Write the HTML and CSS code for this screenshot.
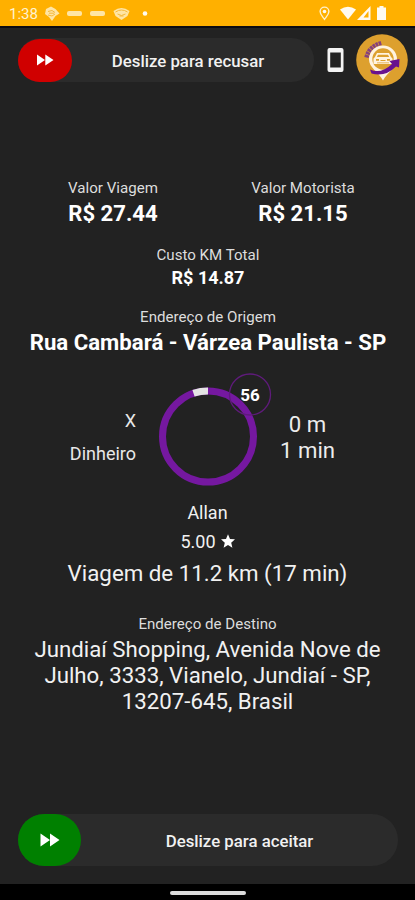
FILE: index.html
```
<!DOCTYPE html>
<html lang="pt-BR">
<head>
<meta charset="utf-8">
<meta name="viewport" content="width=device-width">
<title>Nova viagem</title>
<link rel="stylesheet" href="styles.css">
</head>
<body>
<div class="screen">
  <header class="status">
    <span class="clock">1:38</span>
    <svg class="notices" width="106" height="16" viewBox="0 0 106 16">
      <path class="pale" d="M7 .5l4.500 2.500 4 4.500-4 2.500-3.500 5-3-4-4-3 1-5z"/>
      <path class="cut" d="M4 5.500l4-1 3 2M4 9l4 1 3-2M5 7.200h5"/>
      <rect class="pale" x="23" y="5" width="15" height="5" rx="2"/>
      <rect class="pale" x="46" y="5" width="15" height="5" rx="2"/>
      <path class="pale" d="M69.500 5Q77.500-1 85.500 5l-2 5-6 4-6-4z"/>
      <path class="cut" d="M71.500 6q6-4 12 0M73.500 8q4 3 8 0M75.500 10h4"/>
      <circle class="white" cx="101" cy="7.500" r="2.300"/>
    </svg>
    <svg class="signals" width="70" height="16" viewBox="0 0 70 16">
      <path class="line" d="M5.500 13.300C3.500 10.500 1.100 8.500 1.100 5.500a4.400 4.400 0 0 1 8.800 0c0 3-2.400 5-4.400 7.800z"/>
      <circle class="white" cx="5.500" cy="5.500" r="1.800"/>
      <path class="white" d="M21 3.500q8-5.500 16 0l-8 10z"/>
      <path class="white" fill-rule="evenodd" d="M51.500 0v14H38zM49.500 5v6.500h-5z"/>
      <path class="white" d="M60.500 1.500V0h4v1.500H67V14h-9V1.500z"/>
    </svg>
  </header>

  <div class="top">
    <div class="slider slider-reject">
      <div class="knob"><svg width="17" height="12" viewBox="0 0 17 12"><path d="M0 .5L8 6l-8 5.500zM8.300.5L16.500 6l-8.200 5.500z"/></svg></div>
      <span class="slider-text">Deslize para recusar</span>
    </div>
    <svg class="phone" width="17" height="26" viewBox="0 0 17 26"><path fill-rule="evenodd" d="M2.500 1h12A2 2 0 0 1 16.500 3v20a2 2 0 0 1-2 2h-12a2 2 0 0 1-2-2V3a2 2 0 0 1 2-2zM3.200 5.500v15h10.600v-15z"/></svg>
    <svg class="logo" width="52" height="52" viewBox="0 0 52 52">
      <circle cx="26" cy="26" r="25.800" fill="#dda02e"/>
      <path d="M10.500 23.500Q13 12.500 25.500 9" fill="none" stroke="#85417d" stroke-width="4.500" stroke-dasharray="2.500 .7"/>
      <path d="M27 11.500a14 14 0 0 0-14 14c0 8 9 12 14 21 5-9 14-13 14-21a14 14 0 0 0-14-14z" fill="#fff3df"/>
      <circle cx="27" cy="25" r="10.700" fill="#dda02e"/>
      <path d="M21 19h12l2 4 1.500 1.500V30h-19v-5.500L19 23z" fill="#fff3df"/>
      <path d="M22 20.700h10l1.200 2.300H20.800zM20 25h3v1.800h-3zm11 0h3v1.800h-3zM24.500 26h5v1h-5zM21 28.400h12v.8H21z" fill="#dda02e"/>
      <path d="M14 35.500q11 5 22-5.500l-2.500-3 10-2-.5 8.500-3-1Q29 43.500 15.500 39.500z" fill="#69128f"/>
    </svg>
  </div>

  <main class="trip">
    <section class="fares">
      <div class="fare fare-trip"><div class="label">Valor Viagem</div><div class="amount">R$ 27.44</div></div>
      <div class="fare fare-driver"><div class="label">Valor Motorista</div><div class="amount">R$ 21.15</div></div>
    </section>
    <section class="cost"><div class="label">Custo KM Total</div><div class="cost-value">R$ 14.87</div></section>
    <section class="origin"><div class="label">Endereço de Origem</div><div class="origin-value">Rua Cambará - Várzea Paulista - SP</div></section>
    <section class="timer-row">
      <div class="payment"><div>X</div><div>Dinheiro</div></div>
      <div class="timer">
        <svg width="114" height="114" viewBox="0 0 114 114">
          <circle class="ring" cx="50" cy="63.500" r="45.500"/>
          <path class="elapsed" d="M35.500 20.300A45.500 45.500 0 0 1 50 18"/>
          <circle class="badge-ring" cx="92" cy="21.500" r="20.500"/>
        </svg>
        <span class="badge">56</span>
      </div>
      <div class="pickup"><div>0 m</div><div>1 min</div></div>
    </section>
    <div class="name">Allan</div>
    <div class="rating"><span>5.00</span><svg width="14" height="14" viewBox="0 0 14 14"><path d="M7 .2l2 4.700 5 .4-3.800 3.400 1.200 5L7 11l-4.400 2.700 1.200-5L0 5.300l5-.4z"/></svg></div>
    <div class="distance">Viagem de 11.2 km (17 min)</div>
    <section class="destination"><div class="label">Endereço de Destino</div>
      <div class="destination-value"><div>Jundiaí Shopping, Avenida Nove de</div><div>Julho, 3333, Vianelo, Jundiaí - SP,</div><div>13207-645, Brasil</div></div>
    </section>
  </main>

  <div class="slider slider-accept">
    <div class="knob"><svg width="20" height="14" viewBox="0 0 20 14"><path d="M.5.500L10 7 .5 13.500zM10 .5L19.500 7 10 13.500z"/></svg></div>
    <span class="slider-text">Deslize para aceitar</span>
  </div>
  <footer class="nav"><div class="handle"></div></footer>
</div>
</body>
</html>
```
FILE: styles.css
```
* { box-sizing: border-box; }
body { margin: 0; background: #222; color: #f1f1f1; font-family: Roboto, "Liberation Sans", sans-serif; }
svg { display: block; flex: none; }
.screen { width: 415px; height: 900px; display: flex; flex-direction: column; overflow: hidden; background: #222; white-space: nowrap; }

.status { height: 28px; flex: none; display: flex; align-items: flex-start; padding: 6px 0 0 9px; background: #ffb000; border-bottom: 2px solid #0b0a10; }
.clock { width: 35px; font-size: 15px; line-height: 16px; color: #fff3d0; }
.signals { margin-left: 169px; }
.white { fill: #fffaf0; }
.pale { fill: #ffe5a5; }
.cut { fill: none; stroke: #f5b93c; stroke-width: 1; }
.line { fill: none; stroke: #fff1cc; stroke-width: 1.4; }

.top { height: 60px; flex: none; display: flex; align-items: center; padding: 4px 0 0 18px; }
.slider { display: flex; align-items: center; flex: none; background: #2b2b2b; }
.slider-reject { width: 296px; height: 44px; border-radius: 22px; }
.knob { height: 100%; display: flex; align-items: center; justify-content: center; fill: #fff; }
.slider-reject .knob { width: 54px; height: 43px; border-radius: 22px; background: #d00000; }
.slider-text { flex: 1; padding-top: 2px; text-align: center; font-size: 16.8px; font-weight: 500; }
.slider-reject .slider-text { padding-right: 10px; }
.phone { margin-left: 13px; fill: #f4f4f4; }
.logo { margin-left: 12px; }

.trip { flex: none; height: 726px; padding-top: 90px; text-align: center; }
.label { font-size: 15.1px; line-height: 20px; color: #ddd; }
.fares { display: flex; justify-content: space-between; padding: 0 54px 0 53px; }
.fare { width: 120px; }
.fare-driver { width: 116px; }
.amount { margin-top: 2px; font-size: 22.1px; line-height: 27px; font-weight: 700; color: #fff; }
.cost { margin-top: 18px; padding-left: 1px; }
.cost-value { margin-top: 1px; font-size: 18px; line-height: 24px; font-weight: 700; color: #fff; }
.origin { margin-top: 17px; padding-left: 1px; }
.origin-value { margin-top: 1px; font-size: 22.2px; line-height: 28px; font-weight: 700; color: #fff; }

.timer-row { margin-top: 17px; height: 114px; display: flex; }
.payment { width: 136px; padding-top: 35px; text-align: right; font-size: 18px; line-height: 26px; color: #e8e8e8; }
.payment div + div { margin-top: 7px; }
.timer { position: relative; width: 114px; margin-left: 22px; }
.ring { fill: none; stroke: #7518a0; stroke-width: 7; }
.elapsed { fill: none; stroke: #e4e4e4; stroke-width: 7; }
.badge-ring { fill: none; stroke: #5f1b7b; stroke-width: 1.3; }
.badge { position: absolute; left: 72px; top: 1px; width: 40px; line-height: 42px; font-size: 17px; font-weight: 700; color: #fff; }
.pickup { width: 71px; padding-top: 38px; font-size: 22.2px; line-height: 26px; color: #ececec; }

.name { margin-top: 14px; font-size: 18px; line-height: 24px; }
.rating { margin-top: 5px; display: flex; align-items: center; justify-content: center; gap: 5px; font-size: 18px; line-height: 24px; fill: #fff; }
.rating svg { margin-bottom: 2px; }
.distance { margin-top: 5px; font-size: 22.3px; line-height: 28px; }
.destination { margin-top: 27px; }
.destination-value { margin-top: 2px; font-size: 22.25px; line-height: 26px; }

.slider-accept { width: 380px; height: 52px; margin-left: 18px; border-radius: 26px; }
.slider-accept .knob { width: 63px; border-radius: 26px; background: #008000; }
.nav { flex: none; height: 16px; margin-top: 18px; background: #000; padding: 7px 0 0 170px; }
.handle { width: 76px; height: 4px; border-radius: 2px; background: #ddd; }
```
